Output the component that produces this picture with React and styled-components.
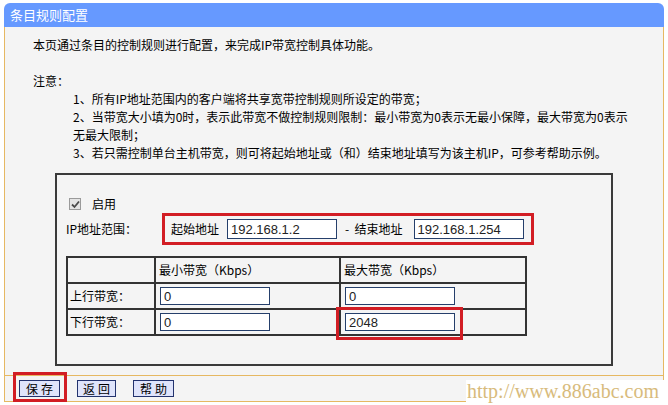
import React from "react";
import styled, { createGlobalStyle } from "styled-components";

const GlobalStyle = createGlobalStyle`
  html, body {
    margin: 0;
    padding: 0;
    background: #ffffff;
  }
  body {
    font-family: "Noto Sans CJK SC", "Noto Sans", sans-serif;
    font-size: 12px;
    color: #000;
  }
`;

const ORANGE = "#e6b862";

const Page = styled.div`
  position: relative;
  width: 668px;
  height: 405px;
  overflow: hidden;
`;

const Panel = styled.div`
  margin: 3px 0 0 4px;
  width: 660px;
`;

const TitleBar = styled.div`
  height: 24px;
  line-height: 24px;
  padding-left: 6px;
  background: #6699ff;
  border-radius: 6px 6px 0 0;
  color: #ffffff;
  font-size: 13px;
`;

const Body = styled.div`
  border-left: 1px solid ${ORANGE};
  border-right: 1px solid ${ORANGE};
  background: #f4f4f4;
  padding: 9px 0 9px 28px;
  line-height: 18px;
`;

const Paragraph = styled.div`
  margin-bottom: ${(p) => p.$gap || 0}px;
`;

const NoteList = styled.div`
  padding-left: 40px;
`;

const ConfigBox = styled.div`
  box-sizing: border-box;
  width: 558px;
  height: 193px;
  margin: 11px 0 0 22px;
  border: 2px solid #3a3a3a;
  padding: 21px 0 0 9px;
`;

const CheckRow = styled.label`
  display: flex;
  align-items: center;
  height: 16px;
  gap: 11px;
  padding-left: 3px;
`;

const CheckMark = styled.span`
  box-sizing: border-box;
  width: 12px;
  height: 12px;
  border: 1px solid #9a9a9a;
  background: #e4e4e4;
  display: flex;
  align-items: center;
  justify-content: center;
`;

const RangeRow = styled.div`
  display: flex;
  align-items: center;
  margin-top: 1px;
  height: 32px;
`;

const RangeLabel = styled.span`
  width: 96px;
  flex: none;
`;

const Highlight = styled.div`
  box-sizing: border-box;
  display: flex;
  align-items: center;
  height: 32px;
  width: 372px;
  border: 3px solid #d21d24;
  padding-left: 6px;
`;

const FieldText = styled.span`
  margin-right: ${(p) => p.$after}px;
  margin-left: ${(p) => p.$before || 0}px;
  white-space: pre;
`;

const TextInput = styled.input`
  box-sizing: border-box;
  width: 110px;
  height: ${(p) => p.$h || 20}px;
  border: 1px solid #253f6b;
  background: #ffffff;
  padding: 0 3px;
  margin: 0;
  font-family: "Liberation Sans", Arial, sans-serif;
  font-size: 13px;
  color: #222;
  outline: none;
`;

const RateTable = styled.table`
  border-collapse: collapse;
  margin-top: 11px;
  table-layout: fixed;
  width: 459px;
`;

const Column = styled.col`
  width: ${(p) => p.$w}px;
`;

const Row = styled.tr`
  height: 26px;
`;

const Cell = styled.td`
  border: 2px solid #333;
  padding: 0 0 0 ${(p) => p.$pad || 3}px;
  vertical-align: middle;
  white-space: nowrap;
  line-height: 16px;
`;

const InputSlot = styled.div`
  position: relative;
  display: flex;
  width: max-content;
  margin-left: 1px;
`;

const MarkFrame = styled.span`
  position: absolute;
  left: -9px;
  right: -8px;
  top: -6px;
  bottom: -9px;
  border: 3px solid #d21d24;
  pointer-events: none;
`;

const ButtonBar = styled.div`
  display: flex;
  align-items: center;
  gap: 17px;
  height: 25px;
  padding-left: 14px;
  border: 1px solid ${ORANGE};
  background: #f4f4f4;
`;

const ButtonSlot = styled.div`
  position: relative;
  display: inline-flex;
`;

const ButtonMark = styled.span`
  position: absolute;
  left: -6px;
  right: -7px;
  top: -8px;
  bottom: -5px;
  border: 3px solid #d21d24;
  pointer-events: none;
`;

const ActionButton = styled.button`
  box-sizing: border-box;
  width: ${(p) => p.$w}px;
  height: 17px;
  padding: 0 0 0 3px;
  margin: 0;
  border: 1px solid #23336e;
  background: #dfe4fb;
  font-family: "Noto Sans CJK SC", sans-serif;
  font-size: 12px;
  letter-spacing: 3px;
  line-height: 15px;
  color: #000;
`;

const Watermark = styled.div`
  position: absolute;
  left: 466px;
  top: 380px;
  width: 202px;
  height: 25px;
  background: #ffffff;
  color: #d8bb7c;
  font-family: "Liberation Serif", "Times New Roman", serif;
  font-size: 20px;
  line-height: 22px;
  padding-left: 1px;
  box-sizing: border-box;
  white-space: nowrap;
`;

function Tick() {
  return (
    <svg width="9" height="9" viewBox="0 0 9 9">
      <path d="M1 4.5 L3.5 7 L8 1.5" fill="none" stroke="#4a4a4a" strokeWidth="1.8" />
    </svg>
  );
}

export default function App() {
  return (
    <Page>
      <GlobalStyle />
      <Panel>
        <TitleBar>条目规则配置</TitleBar>
        <Body>
          <Paragraph $gap={18}>本页通过条目的控制规则进行配置，来完成IP带宽控制具体功能。</Paragraph>
          <Paragraph>注意：</Paragraph>
          <NoteList>
            <Paragraph>1、所有IP地址范围内的客户端将共享宽带控制规则所设定的带宽；</Paragraph>
            <Paragraph>
              2、当带宽大小填为0时，表示此带宽不做控制规则限制：最小带宽为0表示无最小保障，最大带宽为0表示
              <br />
              无最大限制；
            </Paragraph>
            <Paragraph>3、若只需控制单台主机带宽，则可将起始地址或（和）结束地址填写为该主机IP，可参考帮助示例。</Paragraph>
          </NoteList>

          <ConfigBox>
            <CheckRow>
              <CheckMark>
                <Tick />
              </CheckMark>
              启用
            </CheckRow>
            <RangeRow>
              <RangeLabel>IP地址范围：</RangeLabel>
              <Highlight>
                <FieldText $after={8}>起始地址</FieldText>
                <TextInput defaultValue="192.168.1.2" />
                <FieldText $before={8} $after={11}>-  结束地址</FieldText>
                <TextInput defaultValue="192.168.1.254" />
              </Highlight>
            </RangeRow>
            <RateTable>
              <colgroup>
                <Column $w={88} />
                <Column $w={185} />
                <Column $w={186} />
              </colgroup>
              <tbody>
                <Row>
                  <Cell />
                  <Cell>最小带宽（Kbps）</Cell>
                  <Cell>最大带宽（Kbps）</Cell>
                </Row>
                <Row>
                  <Cell $pad={2}>上行带宽：</Cell>
                  <Cell>
                    <InputSlot>
                      <TextInput $h={18} defaultValue="0" />
                    </InputSlot>
                  </Cell>
                  <Cell>
                    <InputSlot>
                      <TextInput $h={18} defaultValue="0" />
                    </InputSlot>
                  </Cell>
                </Row>
                <Row>
                  <Cell $pad={2}>下行带宽：</Cell>
                  <Cell>
                    <InputSlot>
                      <TextInput $h={18} defaultValue="0" />
                    </InputSlot>
                  </Cell>
                  <Cell>
                    <InputSlot>
                      <TextInput $h={18} defaultValue="2048" />
                      <MarkFrame />
                    </InputSlot>
                  </Cell>
                </Row>
              </tbody>
            </RateTable>
          </ConfigBox>
        </Body>
        <ButtonBar>
          <ButtonSlot>
            <ActionButton $w={41}>保存</ActionButton>
            <ButtonMark />
          </ButtonSlot>
          <ActionButton $w={39}>返回</ActionButton>
          <ActionButton $w={41}>帮助</ActionButton>
        </ButtonBar>
      </Panel>
      <Watermark>http://www.886abc.com</Watermark>
    </Page>
  );
}
